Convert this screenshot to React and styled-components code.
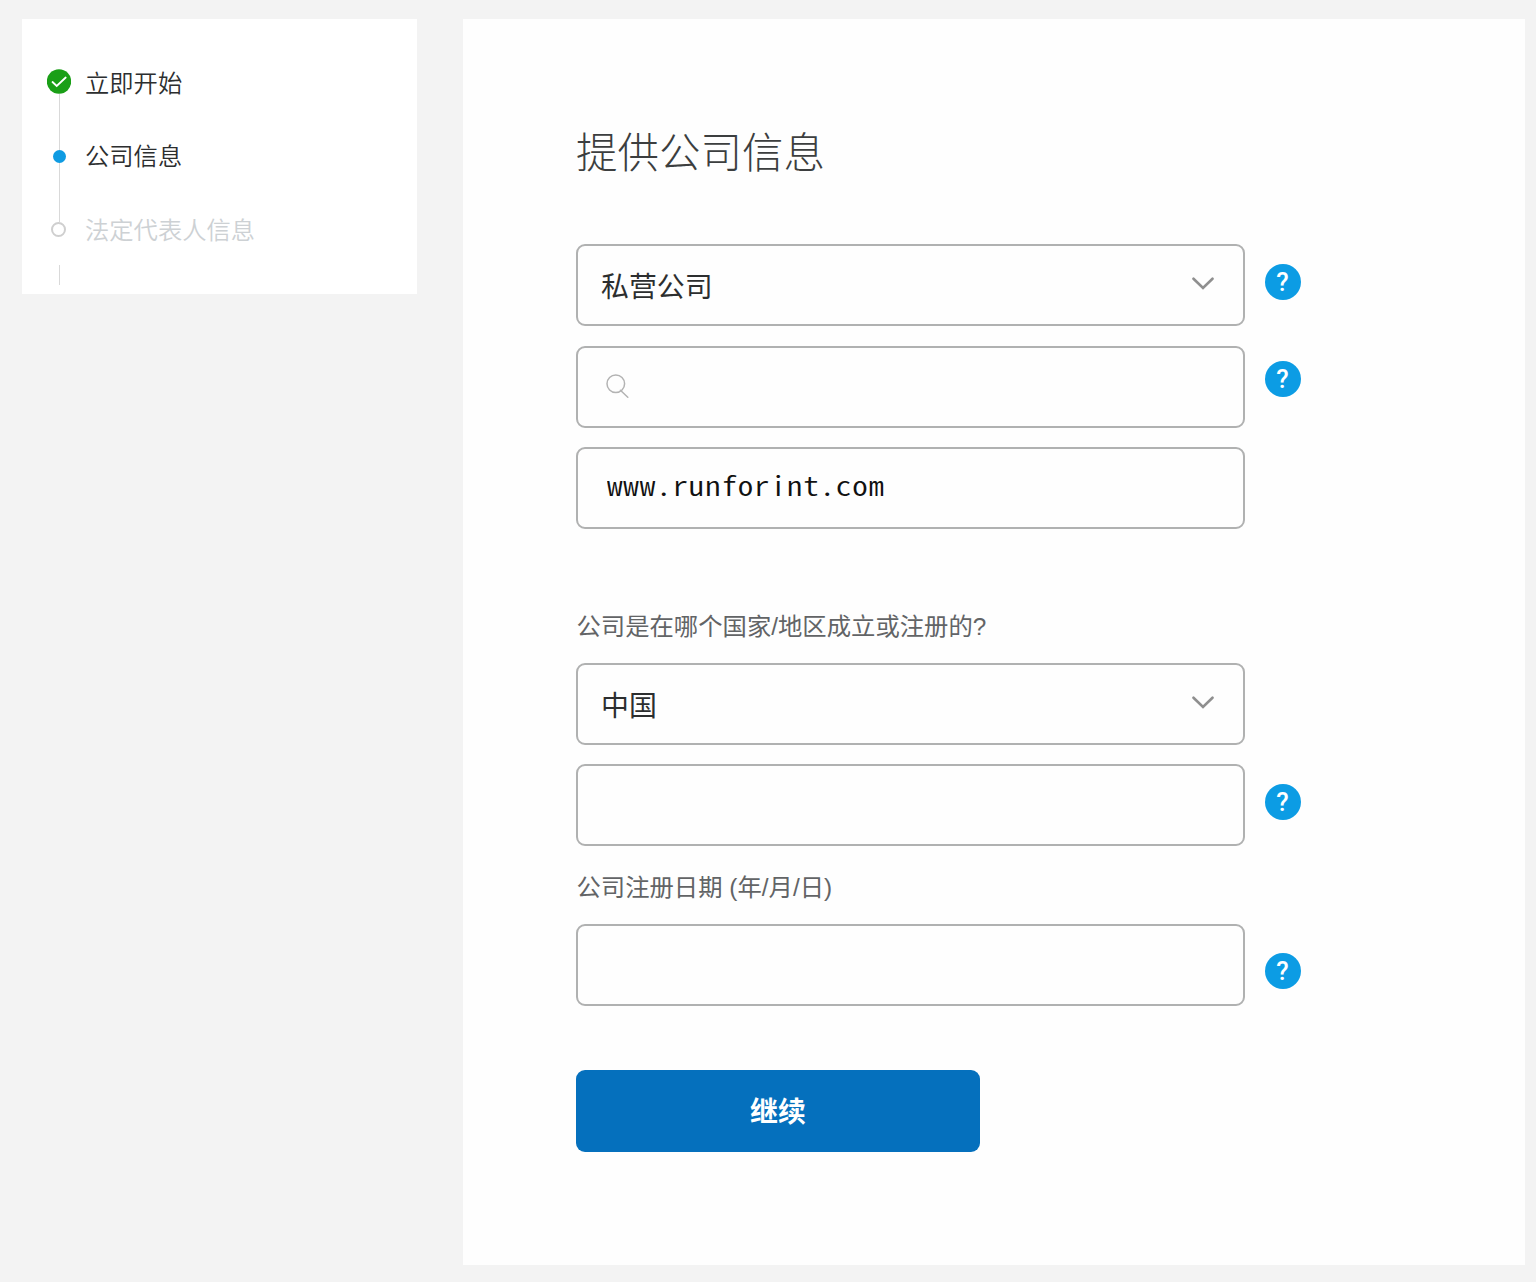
import React from 'react'
import styled, { createGlobalStyle } from 'styled-components'

const GlobalStyle = createGlobalStyle`
  * {
    box-sizing: border-box;
  }

  body {
    margin: 0;
    background: #f3f3f3;
    font-family: 'Liberation Sans', 'Noto Sans CJK SC', sans-serif;
  }
`

const Page = styled.div`
  display: flex;
  align-items: flex-start;
  gap: 46px;
  width: 1536px;
  height: 1282px;
  padding: 19px 11px 17px 22px;
`

const Sidebar = styled.aside`
  display: flex;
  width: 395px;
  height: 275px;
  padding-left: 25px;
  background: #fff;
`

const Rail = styled.div`
  display: flex;
  flex-direction: column;
  align-items: center;
  width: 24px;
  padding-top: 50px;
`

const Line = styled.div`
  flex: none;
  width: 1px;
  height: ${props => props.$height}px;
  margin-top: ${props => props.$gap || 0}px;
  background: #d9d9d9;
`

const Dot = styled.div`
  flex: none;
  width: 13px;
  height: 13px;
  border-radius: 50%;
  background: #0f9be2;
`

const Ring = styled.div`
  flex: none;
  width: 15px;
  height: 15px;
  margin-right: 1px;
  border: 2px solid #cfcfcf;
  border-radius: 50%;
`

const Steps = styled.ul`
  margin: 0 0 0 14px;
  padding: 26px 0 0;
  list-style: none;
`

const Step = styled.li`
  height: 73.3px;
  line-height: 73.3px;
  font-size: 24.3px;
  font-weight: 350;
  font-family: 'Noto Sans CJK SC', sans-serif;
  color: ${props => (props.$pending ? '#cdd1d4' : '#2c2e2f')};
`

const Main = styled.main`
  width: 1062px;
  height: 1246px;
  padding: 101px 0 0 113px;
  background: #fefefe;
`

const Title = styled.h1`
  margin: 0 0 64px;
  height: 60px;
  line-height: 60px;
  font-size: 41.5px;
  font-weight: 200;
  font-family: 'Noto Sans CJK SC', sans-serif;
  color: #3c3e3f;
`

const Row = styled.div`
  display: flex;
  align-items: flex-start;
  gap: 19.5px;
  margin-bottom: ${props => props.$after}px;
`

const Field = styled.div`
  display: flex;
  align-items: center;
  justify-content: space-between;
  width: 669px;
  height: 82px;
  padding: 0 28.5px 0 23px;
  border: 2px solid #b0b1b1;
  border-radius: 9px;
  background: #fefefe;
`

const Value = styled.span`
  padding-bottom: 1px;
  font-size: 27.9px;
  line-height: 40px;
  font-family: 'Noto Sans CJK SC', sans-serif;
  color: #2c2e2f;
`

const Website = styled.span`
  margin: 0 0 7px 6px;
  font-size: 26.5px;
  font-weight: 350;
  line-height: 40px;
  letter-spacing: 0.72px;
  font-family: 'Noto Sans CJK SC', sans-serif;
  font-feature-settings: 'hwid';
  color: #111;
  transform: scaleX(1.17);
  transform-origin: left center;
`

const Label = styled.div`
  height: 36px;
  margin-bottom: ${props => props.$after}px;
  padding-left: 0.5px;
  line-height: 38px;
  font-size: 24.35px;
  color: #626466;
`

const Help = styled.div`
  width: 36px;
  height: 36px;
  margin-top: ${props => props.$top}px;
  border-radius: 50%;
  background: #0c9ce4;
  color: #fff;
  font: 500 25.5px/37px Roboto, sans-serif;
  text-align: center;
`

const Submit = styled.button`
  display: block;
  width: 404px;
  height: 82px;
  padding: 0 0 3px;
  border: 0;
  border-radius: 9px;
  background: #0570bd;
  color: #fff;
  font: 700 27.9px/78px 'Noto Sans CJK SC', sans-serif;
`

const Check = () => (
  <svg width="24" height="25" viewBox="0 0 24 25">
    <circle cx="12" cy="12.5" r="12.2" fill="#1a9f17" />
    <path
      d="M5.5 13l4.2 4 9-8.5"
      fill="none"
      stroke="#fff"
      strokeWidth="1.8"
      strokeLinecap="round"
    />
  </svg>
)

const Chevron = () => (
  <svg width="24" height="16" viewBox="0 0 24 16">
    <path
      d="M2.5 1.7l9.5 9.3 9.5-9.3"
      fill="none"
      stroke="#8f8f8f"
      strokeWidth="2.6"
      strokeLinecap="round"
    />
  </svg>
)

const Search = styled.svg`
  margin: 0 0 2px 5px;
`

const App = () => (
  <Page>
    <GlobalStyle />
    <Sidebar>
      <Rail>
        <Check />
        <Line $height={56} />
        <Dot />
        <Line $height={59} />
        <Ring />
        <Line $height={20} $gap={28} />
      </Rail>
      <Steps>
        <Step>立即开始</Step>
        <Step>公司信息</Step>
        <Step $pending>法定代表人信息</Step>
      </Steps>
    </Sidebar>
    <Main>
      <Title>提供公司信息</Title>
      <Row $after={20}>
        <Field>
          <Value>私营公司</Value>
          <Chevron />
        </Field>
        <Help $top={19.5}>?</Help>
      </Row>
      <Row $after={19}>
        <Field>
          <Search width="24" height="26" viewBox="0 0 24 26">
            <g fill="none" stroke="#b3b3b3" strokeWidth="1.5">
              <circle cx="9.8" cy="10.8" r="8.8" />
              <path d="M14.4 17.2l7.4 7" strokeLinecap="round" />
            </g>
          </Search>
        </Field>
        <Help $top={15}>?</Help>
      </Row>
      <Row $after={79}>
        <Field>
          <Website>www.runforint.com</Website>
        </Field>
      </Row>
      <Label $after={19}>公司是在哪个国家/地区成立或注册的?</Label>
      <Row $after={19}>
        <Field>
          <Value>中国</Value>
          <Chevron />
        </Field>
      </Row>
      <Row $after={23}>
        <Field />
        <Help $top={19.5}>?</Help>
      </Row>
      <Label $after={19}>公司注册日期 (年/月/日)</Label>
      <Row $after={64}>
        <Field />
        <Help $top={28.5}>?</Help>
      </Row>
      <Submit>继续</Submit>
    </Main>
  </Page>
)

export default App
